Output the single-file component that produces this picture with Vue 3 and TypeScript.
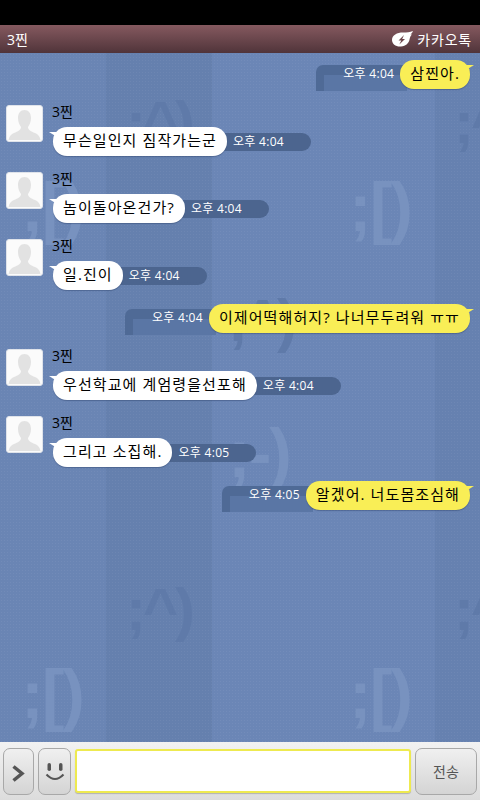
<script setup lang="ts">
interface Message {
  id: number;
  mine: boolean;
  text: string;
  time: string;
}

const messages: Message[] = [
  { id: 1, mine: true, text: '삼찐아.', time: '오후 4:04' },
  { id: 2, mine: false, text: '무슨일인지 짐작가는군', time: '오후 4:04' },
  { id: 3, mine: false, text: '놈이돌아온건가?', time: '오후 4:04' },
  { id: 4, mine: false, text: '일.진이', time: '오후 4:04' },
  { id: 5, mine: true, text: '이제어떡해허지? 나너무두려워 ㅠㅠ', time: '오후 4:04' },
  { id: 6, mine: false, text: '우선학교에 계엄령을선포해', time: '오후 4:04' },
  { id: 7, mine: false, text: '그리고 소집해.', time: '오후 4:05' },
  { id: 8, mine: true, text: '알겠어. 너도몸조심해', time: '오후 4:05' },
];

// 배경 이모티콘 워터마크
const marks = [
  { text: ';^)', x: 126, y: 40, kind: 'dark' },
  { text: ';^)', x: 454, y: 40, kind: 'dark' },
  { text: ';[)', x: 21, y: 120, kind: 'light' },
  { text: ';[)', x: 349, y: 120, kind: 'light' },
  { text: ';^)', x: 228, y: 238, kind: 'dark' },
  { text: ';-)', x: 228, y: 366, kind: 'light wide' },
  { text: ';^)', x: 126, y: 527, kind: 'dark' },
  { text: ';^)', x: 454, y: 527, kind: 'dark' },
  { text: ';[)', x: 21, y: 607, kind: 'light' },
  { text: ';[)', x: 349, y: 607, kind: 'light' },
];
</script>

<template>
  <div class="phone">
    <div class="status"></div>
    <header class="title-bar">
      <span class="title">3찐</span>
      <span class="brand">
        <svg width="21" height="16" viewBox="0 0 21 16">
          <path d="M21 0 C18 1.500 15 1.500 11 1.500 C5 1.500 0 4 0 9 C0 13 4 16 9 15.500 C14 15 17 12 17.500 8.500 C18 6 19 4 20 3.500 L18.500 3.500 C19.500 2.500 20.500 1.500 21 0Z" fill="#fff" />
          <path d="M12 4 L6.500 9.500 L9.300 9.500 L7.300 13.500 L13 8 L10.200 8Z" fill="#6b4449" />
        </svg>
        <span class="brand-name">카카오톡</span>
      </span>
    </header>

    <main class="chat">
      <div class="marks">
        <span
          v-for="(m, i) in marks"
          :key="i"
          :class="['mark', m.kind, { wide: m.text === ';[)' }]"
          :style="{ left: m.x + 'px', top: m.y + 'px' }"
        >{{ m.text }}</span>
      </div>

      <template v-for="msg in messages" :key="msg.id">
        <div v-if="msg.mine" class="row mine">
          <div class="stamp">
            <span class="stamp-text">{{ msg.time }}</span>
          </div>
          <div class="bubble yellow">{{ msg.text }}</div>
        </div>
        <div v-else class="row other">
          <div class="avatar">
            <svg width="35" height="35" viewBox="0 0 35 35">
              <path d="M17.500 4 C21.500 4 24 7 24 12 C24 16 22.500 19 21 21 C21 24 24 25.500 28 27 C31 28 32.500 30 33.500 34 L1.500 34 C2.500 30 4 28 7 27 C11 25.500 14 24 14 21 C12.500 19 11 16 11 12 C11 7 13.500 4 17.500 4Z" fill="#e2e2e2" />
            </svg>
          </div>
          <div class="body">
            <div class="name">3찐</div>
            <div class="line">
              <div class="bubble white">{{ msg.text }}</div>
              <div class="pill">{{ msg.time }}</div>
            </div>
          </div>
        </div>
      </template>
    </main>

    <footer class="input-bar">
      <button class="btn arrow">
        <svg width="16" height="24" viewBox="0 0 16 24">
          <path d="M2.500 7.500 L11 14.500 L2.500 21.500" fill="none" stroke="#555" stroke-width="3.500" />
        </svg>
      </button>
      <button class="btn smile">
        <svg width="22" height="24" viewBox="0 0 22 24">
          <rect x="3.500" y="4" width="3.500" height="8" rx="1.750" fill="#555" />
          <rect x="15" y="4" width="3.500" height="8" rx="1.750" fill="#555" />
          <path d="M2.500 15.500 Q11 24.500 19.500 15.500" fill="none" stroke="#555" stroke-width="2" />
        </svg>
      </button>
      <div class="field"></div>
      <button class="btn send">전송</button>
    </footer>
  </div>
</template>

<style scoped>
.phone {
  width: 480px;
  height: 800px;
  display: flex;
  flex-direction: column;
  font-family: "Open Sans", "Noto Sans CJK KR", sans-serif;
  overflow: hidden;
}

.status {
  height: 25px;
  background: #000;
  flex: none;
}

.title-bar {
  height: 28px;
  flex: none;
  display: flex;
  align-items: center;
  justify-content: space-between;
  padding: 0 8px 0 7px;
  background: linear-gradient(#85595f, #50343a);
  color: #fff;
  font-size: 14px;
  box-sizing: border-box;
}

.brand {
  display: flex;
  align-items: center;
  gap: 4px;
}

.brand-name {
  font-size: 14px;
  letter-spacing: 0.8px;
}

.chat {
  position: relative;
  flex: 1;
  overflow: hidden;
  background-color: #6a85b4;
  background-image:
    radial-gradient(rgba(255, 255, 255, 0.05) 1px, transparent 1px),
    linear-gradient(90deg, #6a85b4 0, #6a85b4 106px, #6580ae 106px, #6580ae 212px, #6b86b6 212px, #6b86b6 435px, #6681b0 435px);
  background-size: 3px 3px, 100% 100%;
}

.marks {
  position: absolute;
  inset: 0;
}

.mark {
  position: absolute;
  font-family: "Liberation Sans", sans-serif;
  font-weight: 700;
  font-size: 60px;
  letter-spacing: -3px;
  line-height: 1;
  white-space: nowrap;
}

.mark.wide {
  font-size: 68px;
  letter-spacing: -2px;
}

.mark.dark {
  color: #5f7aa9;
}

.mark.light {
  color: #7892bf;
}

.row {
  position: relative;
  display: flex;
}

.row.mine {
  justify-content: flex-end;
  align-items: flex-start;
  height: 29px;
  margin-top: 14px;
  padding-right: 10px;
}

.marks + .row.mine {
  margin-top: 7px;
}

.row.other {
  margin-top: 16px;
  padding-left: 6px;
}

.avatar {
  width: 37px;
  height: 37px;
  flex: none;
  box-sizing: border-box;
  background: #fbfbfb;
  border: 1px solid #dfe3ea;
  border-radius: 3px;
  overflow: hidden;
}

.avatar svg {
  display: block;
}

.body {
  margin-left: 9px;
}

.name {
  height: 22px;
  font-size: 14px;
  line-height: 14px;
  color: #000;
}

.line {
  display: flex;
  align-items: center;
  padding-left: 1px;
}

.bubble {
  position: relative;
  z-index: 1;
  height: 29px;
  padding: 0 10px;
  box-sizing: border-box;
  border-radius: 14px;
  font-size: 15px;
  letter-spacing: 1.100px;
  line-height: 27px;
  color: #000;
  white-space: nowrap;
  box-shadow: 0 1px 1px rgba(40, 60, 100, 0.4);
}

.bubble::after {
  content: "";
  position: absolute;
  top: 5px;
  width: 0;
  height: 0;
  border-top: 5px solid transparent;
}

.white {
  background: #fff;
}

.white::after {
  left: -4px;
  border-left: 8px solid transparent;
  border-top-color: #fff;
}

.yellow {
  background: #f9ee56;
}

.yellow::after {
  right: -4px;
  border-right: 8px solid transparent;
  border-top-color: #f9ee56;
}

.pill {
  height: 18px;
  margin-left: -10px;
  padding: 0 27px 0 16px;
  border-radius: 0 9px 9px 0;
  background: #4c658f;
  color: #fff;
  font-size: 12px;
  letter-spacing: 0.3px;
  line-height: 18px;
  white-space: nowrap;
}

.stamp {
  position: relative;
  margin-top: 5px;
  height: 26px;
  width: 91px;
  margin-right: -7px;
  box-sizing: border-box;
  border-radius: 7px 0 0 0;
  background: #4f6a96;
  padding: 10px 0 0 8px;
}

.stamp::before {
  content: "";
  display: block;
  height: 16px;
  background: #5a76a5;
}

.stamp-text {
  position: absolute;
  top: 0;
  right: 13px;
  height: 18px;
  color: #fff;
  font-size: 12px;
  letter-spacing: 0.3px;
  line-height: 18px;
  white-space: nowrap;
}

.input-bar {
  height: 58px;
  flex: none;
  display: flex;
  align-items: center;
  box-sizing: border-box;
  padding: 0 3px;
  background: linear-gradient(#f2f2f2, #dcdcdc);
}

.btn {
  height: 47px;
  margin: 0;
  padding: 0;
  flex: none;
  display: flex;
  align-items: center;
  justify-content: center;
  border: 1px solid #a8a8a8;
  border-radius: 7px;
  background: linear-gradient(#f0f0f0, #d4d4d4);
  font-family: inherit;
}

.arrow {
  width: 31px;
  margin-right: 4px;
}

.smile {
  width: 33px;
}

.field {
  width: 337px;
  height: 44px;
  margin-left: 4px;
  box-sizing: border-box;
  background: #fff;
  border: 2px solid #eeea50;
  border-radius: 3px;
  box-shadow: 0 1px 1px rgba(0, 0, 0, 0.2);
}

.send {
  width: 62px;
  margin-left: 4px;
  font-size: 14px;
  color: #555;
}
</style>

<style>
html,
body {
  margin: 0;
  background: #000;
}
</style>
